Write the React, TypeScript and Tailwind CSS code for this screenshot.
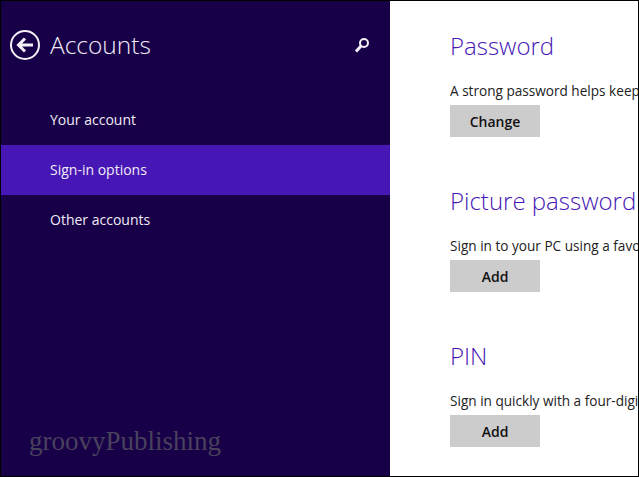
const font = { fontFamily: '"Open Sans", "Noto Sans", sans-serif' };

const navItems = [
  { label: "Your account", active: false },
  { label: "Sign-in options", active: true },
  { label: "Other accounts", active: false },
];

const sections = [
  { title: "Password", body: "A strong password helps keep your account safe", action: "Change" },
  { title: "Picture password", body: "Sign in to your PC using a favorite photo", action: "Add" },
  { title: "PIN", body: "Sign in quickly with a four-digit code", action: "Add" },
];

export default function App() {
  return (
    <div className="flex h-[477px] w-[639px] overflow-hidden border border-black bg-white" style={font}>
      <aside className="flex w-[389px] shrink-0 flex-col bg-[#180048] text-[#f0ecf5]">
        <header className="flex h-[88px] items-center pl-[8px] pr-[20px]">
          <svg width="32" height="32" viewBox="0 0 32 32" fill="none" stroke="#f4f1f7" className="shrink-0">
            <circle cx="16" cy="16" r="14" strokeWidth="2" />
            <path d="M24 16H10M16 9.5L9.5 16L16 22.5" strokeWidth="3" />
          </svg>
          <h1 className="ml-[9px] text-[24.5px] leading-none font-light">Accounts</h1>
          <svg width="16" height="16" viewBox="0 0 16 16" fill="none" stroke="#f4f1f7" className="ml-auto">
            <circle cx="10" cy="6" r="4" strokeWidth="2" />
            <path d="M7 9L2 14.5" strokeWidth="3" />
          </svg>
        </header>
        <nav className="mt-[6px] flex flex-col">
          {navItems.map((item) => (
            <div
              key={item.label}
              className={`flex h-[50px] items-center pb-[2px] pl-[49px] text-[14px] ${item.active ? "bg-[#4617b4]" : ""}`}
            >
              {item.label}
            </div>
          ))}
        </nav>
        <p
          className="mt-auto mb-[21px] ml-[28px] text-[27px] leading-none text-[#48425c]"
          style={{ fontFamily: '"Liberation Serif", serif' }}
        >
          groovyPublishing
        </p>
      </aside>
      <main className="min-w-0 flex-1 overflow-hidden pt-[28px] pl-[60px]">
        {sections.map((section) => (
          <section key={section.title} className="mb-[47px] whitespace-nowrap">
            <h2 className="h-[34px] text-[24px] leading-[34px] font-light text-[#4617b4]">{section.title}</h2>
            <p className="mt-[18px] h-[20px] text-[13.6px] leading-[20px] text-[#222222]">{section.body}</p>
            <button className="mt-[4px] block h-[32px] w-[90px] bg-[#cccccc] text-[14px] font-semibold text-[#111111]">
              {section.action}
            </button>
          </section>
        ))}
      </main>
    </div>
  );
}
